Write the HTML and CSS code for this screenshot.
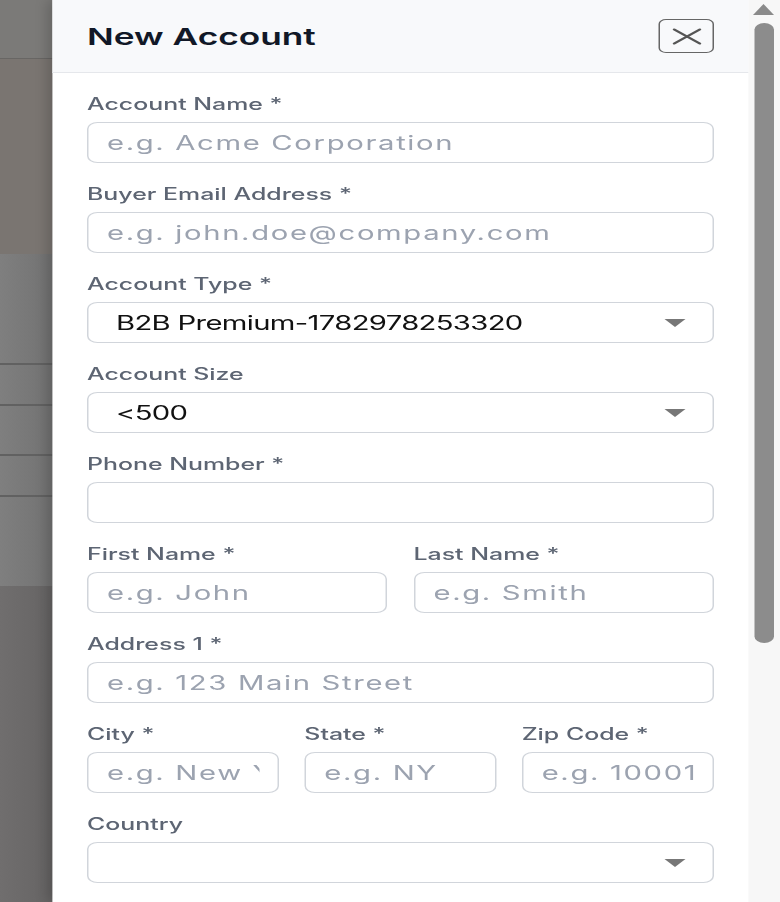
FILE: index.html
```html
<!DOCTYPE html>
<html lang="en">
<head>
    <meta charset="UTF-8">
    <meta name="viewport" content="width=device-width, initial-scale=1.0">
    <title>New Account</title>
    <link rel="stylesheet" href="styles.css">
</head>
<body>
    <div class="screen">
        <div class="backdrop">
            <div class="bg-nav"></div>
            <div class="bg-hero"></div>
            <div class="bg-row bg-row-head"></div>
            <div class="bg-row bg-row-sm"></div>
            <div class="bg-row bg-row-md"></div>
            <div class="bg-row bg-row-sm"></div>
            <div class="bg-row bg-row-last"></div>
            <div class="bg-foot"></div>
        </div>

        <div class="drawer">
            <div class="drawer-header">
                <h1 class="drawer-title">New Account</h1>
                <button type="button" class="close-btn" aria-label="Close">
                    <svg width="20" height="17" viewBox="0 0 20 17">
                        <path d="M1.5 1.5 L18.5 15.5 M18.5 1.5 L1.5 15.5" stroke="#555" stroke-width="2" fill="none" stroke-linecap="round"/>
                    </svg>
                </button>
            </div>

            <form class="drawer-body">
                <div class="field">
                    <label>Account Name *</label>
                    <input type="text" placeholder="e.g. Acme Corporation">
                </div>
                <div class="field">
                    <label>Buyer Email Address *</label>
                    <input type="email" placeholder="e.g. john.doe@company.com">
                </div>
                <div class="field">
                    <label>Account Type *</label>
                    <div class="select-wrap">
                        <select>
                            <option>B2B Premium-1782978253320</option>
                        </select>
                    </div>
                </div>
                <div class="field">
                    <label>Account Size</label>
                    <div class="select-wrap">
                        <select>
                            <option>&lt;500</option>
                            <option>500-1000</option>
                        </select>
                    </div>
                </div>
                <div class="field">
                    <label>Phone Number *</label>
                    <input type="tel">
                </div>
                <div class="row row-2">
                    <div class="field">
                        <label>First Name *</label>
                        <input type="text" placeholder="e.g. John">
                    </div>
                    <div class="field">
                        <label>Last Name *</label>
                        <input type="text" placeholder="e.g. Smith">
                    </div>
                </div>
                <div class="field">
                    <label>Address 1 *</label>
                    <input type="text" placeholder="e.g. 123 Main Street">
                </div>
                <div class="row row-3">
                    <div class="field">
                        <label>City *</label>
                        <input type="text" placeholder="e.g. New York">
                    </div>
                    <div class="field">
                        <label>State *</label>
                        <input type="text" placeholder="e.g. NY">
                    </div>
                    <div class="field">
                        <label>Zip Code *</label>
                        <input type="text" placeholder="e.g. 10001">
                    </div>
                </div>
                <div class="field">
                    <label>Country</label>
                    <div class="select-wrap">
                        <select>
                            <option value=""></option>
                            <option>United States</option>
                        </select>
                    </div>
                </div>
            </form>
        </div>

        <div class="scrollbar">
            <div class="scroll-up"></div>
            <div class="scroll-thumb"></div>
        </div>
    </div>
</body>
</html>
```

FILE: styles.css
```css
body {
    margin: 0;
    overflow: hidden;
    font-family: Inter, "Liberation Sans", sans-serif;
}

/* the app is laid out at 520px and shown stretched to the 780px window */
.screen {
    display: flex;
    width: 520px;
    height: 902px;
    transform: scaleX(1.5);
    transform-origin: 0 0;
}

/* dimmed page behind the drawer */
.backdrop {
    width: 35.33px;
    flex-shrink: 0;
    display: flex;
    flex-direction: column;
    background-color: #6e6c6c;
}

.bg-nav {
    height: 58px;
    background-color: #7b7a78;
    border-bottom: 1px solid #686664;
}

.bg-hero {
    height: 195px;
    background-color: #7a7571;
}

.bg-row {
    box-sizing: border-box;
    background: linear-gradient(to right, #7f7f7f, #727272);
    border-bottom: 2px solid #616161;
}

.bg-row-head {
    height: 111px;
}

.bg-row-sm {
    height: 41px;
}

.bg-row-md {
    height: 50px;
}

.bg-row-last {
    height: 89px;
    border-bottom: none;
}

.bg-foot {
    flex: 1;
    background: linear-gradient(to right, #706e6e, #666464);
}

/* drawer */
.drawer {
    flex: 1;
    background-color: #fff;
    box-shadow: -4px 0 10px rgba(0, 0, 0, 0.18);
}

.drawer-header {
    height: 72px;
    padding: 0 22.67px;
    display: flex;
    align-items: center;
    justify-content: space-between;
    background-color: #f8f9fb;
    border-bottom: 1px solid #e5e7eb;
}

.drawer-title {
    margin: 0;
    font-size: 23.5px;
    font-weight: 600;
    color: #111827;
}

.close-btn {
    width: 36.67px;
    height: 34px;
    padding: 0;
    display: flex;
    align-items: center;
    justify-content: center;
    background: transparent;
    border: 1px solid #666;
    border-radius: 5px;
}

.drawer-body {
    padding: 20px 22.67px 0;
}

.field {
    margin-bottom: 20px;
}

.field label {
    display: block;
    font-size: 16.6px;
    font-weight: 500;
    line-height: 22px;
    color: #5d6573;
    margin-bottom: 7px;
}

.field input,
.field select {
    box-sizing: border-box;
    width: 100%;
    height: 41px;
    margin: 0;
    padding: 0 12.33px;
    font-family: Inter, "Liberation Sans", sans-serif;
    font-size: 19.5px;
    color: #111;
    background-color: #fff;
    border: 1px solid #d1d5db;
    border-radius: 7px;
    outline: none;
}

.field input::placeholder {
    color: #9ca3b0;
    letter-spacing: 1.1px;
}

.field select {
    appearance: none;
    padding: 0 40px 0 18.33px;
    letter-spacing: -0.45px;
}

.select-wrap {
    position: relative;
}

.select-wrap::after {
    content: "";
    position: absolute;
    top: 17px;
    right: 19.33px;
    border-left: 7.67px solid transparent;
    border-right: 7.67px solid transparent;
    border-top: 8px solid #777;
    pointer-events: none;
}

.row {
    display: grid;
}

.row-2 {
    grid-template-columns: 1fr 1fr;
    column-gap: 17.33px;
}

.row-3 {
    grid-template-columns: 1fr 1fr 1fr;
    column-gap: 16.67px;
}

/* scrollbar strip */
.scrollbar {
    width: 21.33px;
    flex-shrink: 0;
    display: flex;
    flex-direction: column;
    align-items: center;
    padding-top: 4px;
    background-color: #f7f7f7;
}

.scroll-up {
    width: 0;
    height: 0;
    border-left: 7.67px solid transparent;
    border-right: 7.67px solid transparent;
    border-bottom: 11px solid #8a8a8a;
    margin-bottom: 8px;
}

.scroll-thumb {
    width: 13.33px;
    height: 620px;
    border-radius: 7px;
    background-color: #8c8c8c;
}
```
